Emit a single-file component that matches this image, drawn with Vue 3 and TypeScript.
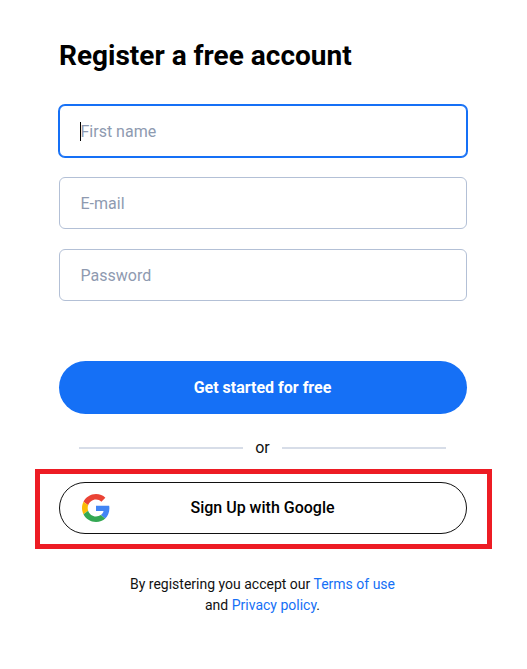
<script setup lang="ts">
import { onMounted, ref } from 'vue'

const first = ref<HTMLInputElement | null>(null)
onMounted(() => first.value?.focus())
</script>

<template>
  <main class="page">
    <h1 class="title">Register a free account</h1>
    <form class="fields" @submit.prevent>
      <div class="field-wrap">
        <input ref="first" class="field" type="text" placeholder="First name" />
        <span class="caret"></span>
      </div>
      <input class="field" type="email" placeholder="E-mail" />
      <input class="field" type="password" placeholder="Password" />
    </form>
    <button class="primary" type="button">Get started for free</button>
    <div class="divider"><span class="line"></span><span class="or">or</span><span class="line"></span></div>
    <div class="highlight">
      <button class="google" type="button">
        <svg class="g" viewBox="0 0 48 48" width="28" height="28" aria-hidden="true">
          <path fill="#EA4335" d="M24 9.5c3.54 0 6.71 1.22 9.21 3.6l6.85-6.85C35.9 2.38 30.47 0 24 0 14.62 0 6.51 5.38 2.56 13.22l7.98 6.19C12.43 13.72 17.74 9.5 24 9.5z"/>
          <path fill="#4285F4" d="M46.98 24.55c0-1.57-.15-3.09-.38-4.55H24v9.02h12.94c-.58 2.96-2.26 5.48-4.78 7.18l7.73 6c4.51-4.18 7.09-10.36 7.09-17.65z"/>
          <path fill="#FBBC05" d="M10.53 28.59c-.48-1.45-.76-2.99-.76-4.59s.27-3.14.76-4.59l-7.98-6.19C.92 16.46 0 20.12 0 24c0 3.88.92 7.54 2.56 10.78l7.97-6.19z"/>
          <path fill="#34A853" d="M24 48c6.48 0 11.93-2.13 15.89-5.81l-7.73-6c-2.15 1.45-4.92 2.3-8.16 2.3-6.26 0-11.57-4.22-13.47-9.91l-7.98 6.19C6.51 42.62 14.62 48 24 48z"/>
        </svg>
        <span>Sign Up with Google</span>
      </button>
    </div>
    <p class="legal">
      By registering you accept our <a href="#">Terms of use</a><br />
      and <a href="#">Privacy policy</a>.
    </p>
  </main>
</template>

<style scoped>
.page {
  width: 527px;
  height: 669px;
  box-sizing: border-box;
  padding: 38px 60px 0 59px;
  font-family: Roboto, "Liberation Sans", sans-serif;
  background: #fff;
  display: flex;
  flex-direction: column;
  overflow: hidden;
}
.title {
  margin: 0 0 32px;
  font-size: 28px;
  line-height: 35px;
  font-weight: 700;
  color: #000;
}
.fields {
  display: flex;
  flex-direction: column;
  gap: 20px;
}
.field-wrap {
  position: relative;
  height: 52px;
}
.field {
  display: block;
  width: 100%;
  height: 52px;
  box-sizing: border-box;
  padding: 0 20.5px;
  border: 1px solid #b3c0d6;
  border-radius: 6px;
  background: #fff;
  font: 400 16px Roboto, "Liberation Sans", sans-serif;
  color: #000;
  caret-color: transparent;
  outline: none;
}
.field::placeholder {
  color: #8e9ab0;
  opacity: 1;
}
.field:focus {
  border-color: #1570f6;
  box-shadow: 0 0 0 1px #1570f6;
}
.caret {
  position: absolute;
  left: 21px;
  top: 17px;
  width: 1px;
  height: 19px;
  background: #000;
}
.primary {
  margin-top: 60px;
  height: 53px;
  border: 0;
  border-radius: 27px;
  padding: 0 7px 0 6px;
  background: #1570f6;
  color: #fff;
  font: 700 16px Roboto, "Liberation Sans", sans-serif;
}
.divider {
  margin: 24px 21px 0 20px;
  height: 20px;
  display: flex;
  align-items: center;
  gap: 12px;
}
.line {
  flex: 1;
  height: 2px;
  background: #d7dde8;
}
.or {
  font-size: 16px;
  line-height: 20px;
  color: #111;
}
.highlight {
  margin: 11px -25px 0 -24px;
  height: 80px;
  box-sizing: border-box;
  border: 5px solid #ed1c24;
  padding: 8px 20px 8px 19px;
}
.google {
  position: relative;
  width: 100%;
  height: 52px;
  display: flex;
  align-items: center;
  justify-content: center;
  padding: 0 7px 2px 6px;
  background: #fff;
  border: 1px solid #111;
  border-radius: 26px;
  font: 500 16px Roboto, "Liberation Sans", sans-serif;
  color: #000;
}
.g {
  position: absolute;
  left: 22px;
  top: 11px;
}
.legal {
  margin: 25px 0 0;
  padding-right: 1px;
  text-align: center;
  font-size: 14px;
  line-height: 21px;
  color: #111;
}
.legal a {
  color: #1570f6;
  text-decoration: none;
}
</style>
